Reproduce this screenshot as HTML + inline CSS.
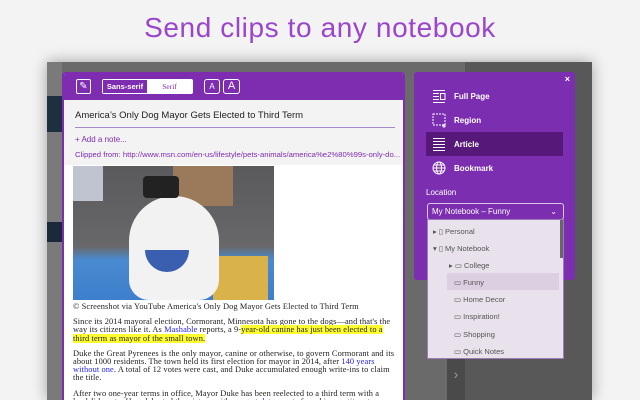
<!DOCTYPE html>
<html><head><style>
*{margin:0;padding:0;box-sizing:border-box}
html,body{width:640px;height:400px;overflow:hidden}
body{background:#f3f3f3;font-family:"Liberation Sans",sans-serif;position:relative}
.abs{position:absolute}
.title{left:0;width:640px;top:12px;text-align:center;font-size:28px;color:#9a45cc;letter-spacing:0.6px}
.page{left:47px;top:62px;width:545px;height:338px;background:#6a6a6a;box-shadow:0 0 14px rgba(0,0,0,.35)}
.clip{left:62px;top:72px;width:343px;height:328px;background:#fff;border:2px solid #7e2cb0;border-bottom:none;border-radius:4px 4px 0 0;overflow:hidden}
.hdr{left:0;top:0;width:339px;height:26px;background:#7e2cb0}
.gray{left:0;top:26px;width:339px;height:65px;background:#f3f3f3}
.serif{font-family:"Liberation Serif",serif;font-size:8.4px;color:#222;line-height:8.2px;letter-spacing:0.1px}
.rp{left:414px;top:72px;width:161px;height:208px;background:#7b2eb0;border-radius:3px;color:#fff;font-size:8px}
.item{position:absolute;left:12px;width:137px;height:24px;font-weight:bold;font-size:8px;color:#fff}
.item span{position:absolute;left:28px;top:8px}
.dd{left:427px;top:219px;width:137px;height:140px;background:#e9e1ec;border:1px solid #9c7cb8;font-size:7.5px;color:#555}
.dd div{position:absolute}
.hl{background:#ffff30}
a{color:#2323ee;text-decoration:none}
</style></head><body>
<div class="abs title">Send clips to any notebook</div>
<div class="abs page">
 <div class="abs" style="left:0;top:0;width:15px;height:338px;background:#7a7a7a"></div>
 <div class="abs" style="left:0;top:160px;width:15px;height:20px;background:#1a2a3a"></div>
 <div class="abs" style="left:418px;top:0;width:127px;height:338px;background:#585858"></div>
 <div class="abs" style="left:400px;top:290px;width:18px;height:48px;background:#4a4a4a;color:#999;font-size:14px;text-align:center;padding-top:14px">›</div>
</div>
<div class="abs" style="left:47px;top:96px;width:15px;height:36px;background:#1e3040"></div>
<div class="abs clip">
 <div class="abs hdr">
  <div class="abs" style="left:12px;top:5px;width:15px;height:15px;border:1px solid #fff;border-radius:2px;color:#fff;font-size:10px;text-align:center;line-height:13px">✎</div>
  <div class="abs" style="left:38px;top:5px;width:91px;height:15px;border:1px solid #fff;border-radius:2px;background:#fff">
   <div class="abs" style="left:0;top:0;width:44px;height:13px;background:#7e2cb0;color:#fff;font-size:7.5px;font-weight:bold;text-align:center;line-height:13px">Sans-serif</div>
   <div class="abs" style="left:44px;top:0;width:45px;height:13px;color:#7e2cb0;font-size:7.5px;text-align:center;line-height:13px;font-family:'Liberation Serif',serif">Serif</div>
  </div>
  <div class="abs" style="left:140px;top:5px;width:16px;height:15px;border:1px solid #fff;border-radius:3px;color:#fff;font-size:8px;text-align:center;line-height:13px">A</div>
  <div class="abs" style="left:159px;top:5px;width:17px;height:15px;border:1px solid #fff;border-radius:3px;color:#fff;font-size:11px;text-align:center;line-height:13px">A</div>
 </div>
 <div class="abs gray">
  <div class="abs" style="left:11px;top:10px;font-size:9.5px;color:#222">America’s Only Dog Mayor Gets Elected to Third Term</div>
  <div class="abs" style="left:11px;top:27px;width:320px;height:1px;background:#a58acd"></div>
  <div class="abs" style="left:11px;top:35px;font-size:8px;color:#7e2cb0">+ Add a note...</div>
  <div class="abs" style="left:11px;top:50px;font-size:7.7px;color:#7e2cb0;white-space:nowrap">Clipped from: http://www.msn.com/en-us/lifestyle/pets-animals/america%e2%80%99s-only-do...</div>
 </div>
 <div class="abs" style="left:9px;top:92px;width:201px;height:134px;background:linear-gradient(#5a5a5c 0%,#68686a 60%,#4a8ad0 70%,#3d7fcc 100%);overflow:hidden">
  <div class="abs" style="left:100px;top:0;width:60px;height:40px;background:#9a7a5a"></div>
  <div class="abs" style="left:140px;top:90px;width:55px;height:44px;background:#d9b34a"></div>
  <div class="abs" style="left:56px;top:30px;width:90px;height:104px;background:#f2f2f2;border-radius:45px 45px 20px 20px"></div>
  <div class="abs" style="left:70px;top:10px;width:36px;height:22px;background:#222;border-radius:4px"></div>
  <div class="abs" style="left:72px;top:84px;width:44px;height:22px;background:#3a5fb0;border-radius:0 0 22px 22px"></div>
  <div class="abs" style="left:0;top:0;width:30px;height:35px;background:#c0c4d0"></div>
 </div>
 <div class="abs serif" style="left:9px;top:229px;width:325px">
  <div style="white-space:nowrap">© Screenshot via YouTube America's Only Dog Mayor Gets Elected to Third Term</div>
  <div style="margin-top:7px">Since its 2014 mayoral election, Cormorant, Minnesota has gone to the dogs—and that's the way its citizens like it. As <a>Mashable</a> reports, a 9-<span class="hl">year-old canine has just been elected to a third term as mayor of the small town.</span></div>
  <div style="margin-top:7px">Duke the Great Pyrenees is the only mayor, canine or otherwise, to govern Cormorant and its about 1000 residents. The town held its first election for mayor in 2014, after <a>140 years without one</a>. A total of 12 votes were cast, and Duke accumulated enough write-ins to claim the title.</div>
  <div style="margin-top:7px">After two one-year terms in office, Mayor Duke has been reelected to a third term with a landslide vote. He celebrated the victory with <a>congratulatory pats</a> from his constituents.</div>
 </div>
</div>
<div class="abs rp">
 <div class="abs" style="right:5px;top:2px;font-size:9px;font-weight:bold">×</div>
 <div class="item" style="top:12px"><svg class="abs" style="left:6px;top:5px" width="14" height="14"><g stroke="#fff" fill="none" stroke-width="1"><path d="M1 1.5h12M1 4.5h6M1 7.5h6M1 10.5h6M1 13.5h12"/><rect x="8.5" y="4.5" width="4.5" height="6"/></g></svg><span>Full Page</span></div>
 <div class="item" style="top:36px"><svg class="abs" style="left:6px;top:5px" width="15" height="15"><path d="M1 1h12v11H1z" stroke="#fff" fill="none" stroke-dasharray="2 1"/><path d="M12 11v4M10 13h4" stroke="#fff"/></svg><span>Region</span></div>
 <div class="item" style="top:60px;background:#56197a"><svg class="abs" style="left:6px;top:5px" width="14" height="14"><path d="M1 1.5h12M1 4.5h12M1 7.5h12M1 10.5h12M1 13.5h12" stroke="#fff"/></svg><span>Article</span></div>
 <div class="item" style="top:84px"><svg class="abs" style="left:6px;top:5px" width="14" height="14"><g stroke="#fff" fill="none"><circle cx="7" cy="7" r="6"/><ellipse cx="7" cy="7" rx="2.5" ry="6"/><path d="M1 7h12M2 4h10M2 10h10"/></g></svg><span>Bookmark</span></div>
 <div class="abs" style="left:12px;top:116px;font-size:8px">Location</div>
 <div class="abs" style="left:13px;top:131px;width:137px;height:17px;border:1px solid #d9c6ea;border-radius:3px;font-size:8px;line-height:15px;padding-left:4px">My Notebook – Funny<span style="position:absolute;right:6px;top:0">⌄</span></div>
</div>
<div class="abs dd">
 <div style="left:132px;top:0;width:3px;height:38px;background:#666"></div>
 <div style="left:5px;top:7px">▸ ▯ Personal</div>
 <div style="left:5px;top:24px">▾ ▯ My Notebook</div>
 <div style="left:21px;top:41px">▸ ▭ College</div>
 <div style="left:19px;top:53px;width:112px;height:17px;background:#dccfe1"></div>
 <div style="left:26px;top:58px">▭ Funny</div>
 <div style="left:26px;top:75px">▭ Home Decor</div>
 <div style="left:26px;top:92px">▭ Inspiration!</div>
 <div style="left:26px;top:110px">▭ Shopping</div>
 <div style="left:26px;top:127px">▭ Quick Notes</div>
</div>
</body></html>
